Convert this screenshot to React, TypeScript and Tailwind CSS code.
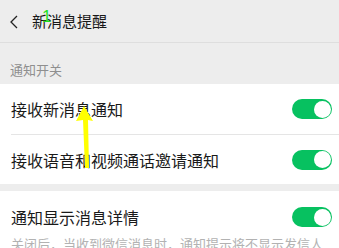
import React from 'react';

const Toggle: React.FC = () => (
  <div className="w-[40px] h-[20px] rounded-full bg-[#07c160] flex items-center justify-end pr-[1.5px] shrink-0">
    <div className="w-[17px] h-[17px] rounded-full bg-white" />
  </div>
);

interface RowProps {
  label: string;
  divider?: boolean;
}

const Row: React.FC<RowProps> = ({ label, divider }) => (
  <div className="pl-[11px]">
    <div className={`h-[50px] flex items-center justify-between pr-[7px] ${divider ? 'border-t border-[#e5e5e5]' : ''}`}>
      <span className="text-[16px] text-[#1a1a1a]">{label}</span>
      <Toggle />
    </div>
  </div>
);

const App: React.FC = () => {
  return (
    <div
      className="relative w-[339px] h-[248px] overflow-hidden bg-[#ededed]"
      style={{ fontFamily: '"Noto Sans CJK SC", "Noto Sans", sans-serif' }}
    >
      <div className="h-[43px] flex items-center border-b border-[#dedede]">
        <svg className="ml-[9px] mt-[1px]" width="10" height="14" viewBox="0 0 10 14">
          <polyline points="8,1 2,7 8,13" fill="none" stroke="#222" strokeWidth="1.3" />
        </svg>
        <span className="ml-[13px] mt-[1px] text-[15px] text-[#181818]">新消息提醒</span>
      </div>

      <div className="h-[41px] flex items-end pl-[10px] pb-[8px]">
        <span className="text-[13px] leading-[13px] text-[#8f8f8f]">通知开关</span>
      </div>

      <div className="bg-white">
        <Row label="接收新消息通知" />
        <Row label="接收语音和视频通话邀请通知" divider />
      </div>

      <div className="h-[7px]" />

      <div className="bg-white pl-[11px] pr-[7px] pt-[14px]">
        <div className="h-[24px] flex items-center justify-between">
          <span className="text-[16px] text-[#1a1a1a]">通知显示消息详情</span>
          <Toggle />
        </div>
        <p className="mt-[6px] text-[13px] leading-[18px] text-[#b2b2b2] whitespace-nowrap">
          关闭后，当收到微信消息时，通知提示将不显示发信人
        </p>
      </div>

      {/* annotation overlays */}
      <span
        className="absolute left-[42px] top-[8px] text-[17px] leading-[18px] text-[#22e022]"
        style={{ fontFamily: '"Liberation Sans", sans-serif' }}
      >
        1
      </span>
      <svg className="absolute left-0 top-0 pointer-events-none" width="339" height="248">
        <polygon points="84,106 76,121 83,120 85,168 89,168 88,120 93,121" fill="#ffff00" />
      </svg>
    </div>
  );
};

export default App;
